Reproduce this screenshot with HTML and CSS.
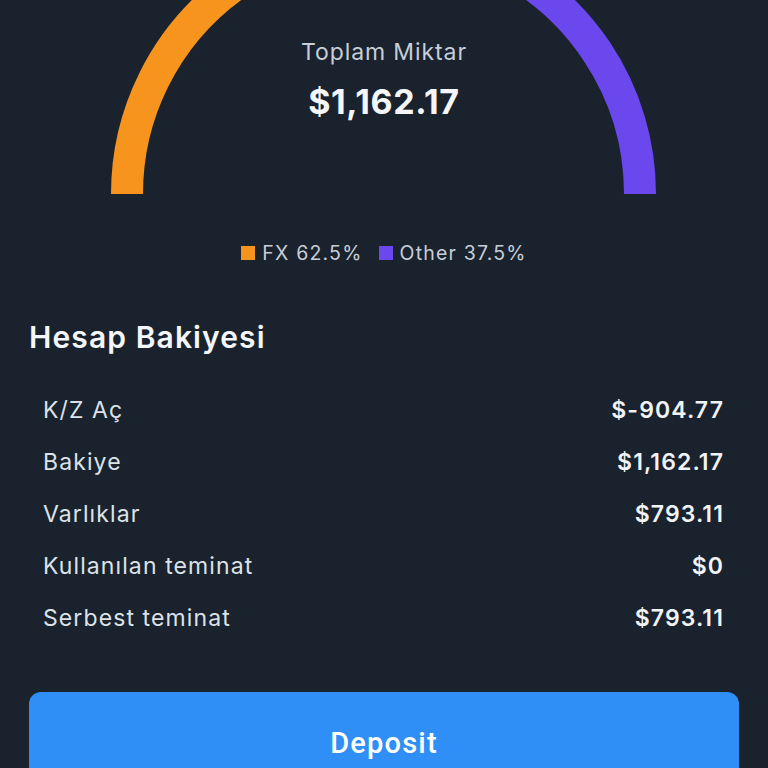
FILE: index.html
```html
<!DOCTYPE html>
<html lang="tr">
  <head>
    <meta charset="UTF-8" />
    <meta name="viewport" content="width=device-width, initial-scale=1.0" />
    <title>Hesap</title>
    <link rel="stylesheet" href="styles.css">
  </head>
  <body>
    <div class="container">
      <div class="gauge">
        <!-- half ring, FX 62.5% from the left, Other 37.5% to the right -->
        <svg class="gauge-ring" width="768" height="194" viewBox="0 0 768 194">
          <path d="M 127 194 A 256.5 256.5 0 0 1 481.7 -43" fill="none" stroke="#f7941d" stroke-width="32" />
          <path d="M 481.7 -43 A 256.5 256.5 0 0 1 640 194" fill="none" stroke="#6b47ee" stroke-width="32" />
        </svg>
        <div class="gauge-label">Toplam Miktar</div>
        <div class="gauge-total">$1,162.17</div>
      </div>

      <div class="legend">
        <span class="legend-item"><span class="swatch fx"></span>FX 62.5%</span>
        <span class="legend-item"><span class="swatch other"></span>Other 37.5%</span>
      </div>

      <h2>Hesap Bakiyesi</h2>
      <div class="balance-list">
        <div class="balance-row"><span>K/Z Aç</span><span class="value">$-904.77</span></div>
        <div class="balance-row"><span>Bakiye</span><span class="value">$1,162.17</span></div>
        <div class="balance-row"><span>Varlıklar</span><span class="value">$793.11</span></div>
        <div class="balance-row"><span>Kullanılan teminat</span><span class="value">$0</span></div>
        <div class="balance-row"><span>Serbest teminat</span><span class="value">$793.11</span></div>
      </div>

      <button type="button" class="deposit">Deposit</button>
    </div>
  </body>
</html>
```

FILE: styles.css
```css
body {
  font-family: Inter, "Noto Sans", sans-serif;
  margin: 0;
  padding: 0;
  background-color: #1a222e;
  color: #e3e7ec;
  overflow: hidden;
}

.container {
  display: flex;
  flex-direction: column;
  padding: 0 29px;
}

.gauge {
  position: relative;
  height: 194px;
  margin: 0 -29px;
  display: flex;
  flex-direction: column;
  align-items: center;
  padding-top: 38px;
  box-sizing: border-box;
}

.gauge-ring {
  position: absolute;
  top: 0;
  left: 0;
}

.gauge-label {
  position: relative;
  font-size: 23px;
  line-height: 28px;
  letter-spacing: 0.9px;
  color: #c7ced8;
}

.gauge-total {
  position: relative;
  margin-top: 16px;
  font-size: 34px;
  line-height: 40px;
  font-weight: 700;
  letter-spacing: 0.6px;
  color: #f4f6f9;
}

.legend {
  display: flex;
  justify-content: center;
  gap: 16px;
  margin-top: 48px;
  font-size: 19.5px;
  line-height: 22px;
  color: #c7ced8;
  letter-spacing: 1.2px;
}

.legend-item {
  display: flex;
  align-items: center;
  gap: 7px;
}

.swatch {
  width: 14px;
  height: 14px;
}

.swatch.fx {
  background-color: #f7941d;
}

.swatch.other {
  background-color: #6b47ee;
}

h2 {
  margin: 55px 0 0;
  font-size: 30px;
  line-height: 36px;
  font-weight: 600;
  letter-spacing: 1.1px;
  color: #f4f6f9;
}

.balance-list {
  margin-top: 29px;
  padding: 0 15px 0 14px;
}

.balance-row {
  display: flex;
  justify-content: space-between;
  align-items: center;
  height: 52px;
  font-size: 23px;
  letter-spacing: 1.1px;
  color: #dde2e8;
}

.balance-row .value {
  font-weight: 600;
  color: #f1f3f6;
}

.deposit {
  margin-top: 48px;
  height: 102px;
  font-family: Roboto, sans-serif;
  font-size: 29px;
  font-weight: 500;
  letter-spacing: 1.2px;
  color: #ffffff;
  background-color: #2f8ff7;
  border: none;
  border-radius: 12px;
  cursor: pointer;
}
```
